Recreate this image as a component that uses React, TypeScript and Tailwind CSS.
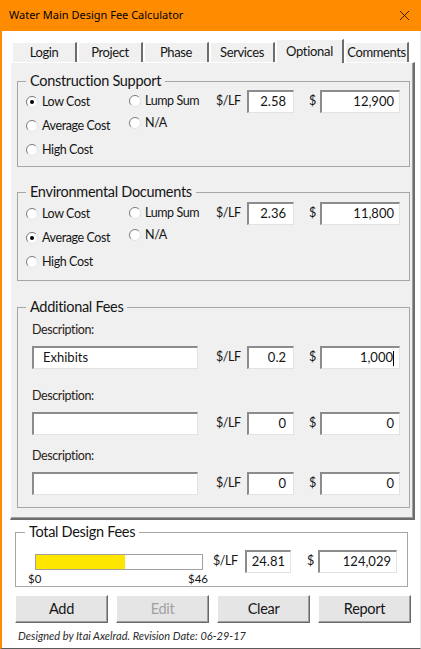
import { X } from 'lucide-react'

const cal = "font-['Lato','Liberation_Sans',sans-serif]"

function Radio({ checked }: { checked?: boolean }) {
  return (
    <svg width="12" height="12" viewBox="0 0 12 12" className="shrink-0">
      <circle cx="6" cy="6" r="5.5" fill="#fff" />
      <path d="M2.1 9.9 A5.5 5.5 0 0 1 9.9 2.1" stroke="#7a7a7a" strokeWidth="1" fill="none" />
      <path d="M9.9 2.1 A5.5 5.5 0 0 1 2.1 9.9" stroke="#e2e2e2" strokeWidth="1" fill="none" />
      {checked && <circle cx="6" cy="6" r="2" fill="#000" />}
    </svg>
  )
}

function Opt({ label, checked, h }: { label: string; checked?: boolean; h: string }) {
  return (
    <div className={`flex items-center gap-[4px] ${h}`}>
      <Radio checked={checked} />
      <span className="text-[12.5px] tracking-[-0.4px] text-[#151515]">{label}</span>
    </div>
  )
}

function Box({ value, className, caret }: { value: string; className: string; caret?: boolean }) {
  return (
    <div
      className={`h-[23px] bg-white border-t-2 border-l-2 border-b border-r border-t-[#8c8c8c] border-l-[#8c8c8c] border-b-[#e3e3e3] border-r-[#e3e3e3] flex items-center text-[13px] text-[#151515] ${className}`}
    >
      {value}
      {caret && <span className="w-px h-[15px] bg-black" />}
    </div>
  )
}

function Amounts({ lf, total, caret }: { lf: string; total: string; caret?: boolean }) {
  return (
    <div className="flex items-center">
      <span className="w-[31px] text-[12.5px] tracking-[-0.4px] text-[#151515]">$/LF</span>
      <Box value={lf} className="w-[47px] justify-end pr-[7px]" />
      <span className="ml-[15px] w-[11px] text-[12.5px] text-[#151515]">$</span>
      <Box value={total} className="w-[80px] justify-end pr-[5px]" caret={caret} />
    </div>
  )
}

function Legend({ children }: { children: string }) {
  return <legend className="px-[4px] text-[14.5px] tracking-[-0.3px] leading-[16px] text-[#151515]">{children}</legend>
}

function CostGroup({
  title,
  sel,
  lf,
  total,
  className,
}: {
  title: string
  sel: number
  lf: string
  total: string
  className: string
}) {
  return (
    <fieldset className={`ml-[6px] w-[392px] border border-[#a6a6a6] pl-[8px] pr-[9px] ${className}`}>
      <Legend>{title}</Legend>
      <div className="flex items-start">
        <div className="w-[103px]">
          <Opt label="Low Cost" checked={sel === 0} h="h-[24px]" />
          <Opt label="Average Cost" checked={sel === 1} h="h-[24px]" />
          <Opt label="High Cost" checked={sel === 2} h="h-[24px]" />
        </div>
        <div className="w-[87px]">
          <Opt label="Lump Sum" h="h-[22px]" />
          <Opt label="N/A" h="h-[22px]" />
        </div>
        <Amounts lf={lf} total={total} />
      </div>
    </fieldset>
  )
}

function FeeRow({ desc, lf, total, caret, mt }: { desc: string; lf: string; total: string; caret?: boolean; mt: string }) {
  return (
    <div className={mt}>
      <div className="text-[12.5px] tracking-[-0.4px] leading-[16px] text-[#2a2218]">Description:</div>
      <div className="flex items-center mt-[8px]">
        <Box value={desc} className="w-[166px] pl-[9px]" />
        <div className="ml-[18px]">
          <Amounts lf={lf} total={total} caret={caret} />
        </div>
      </div>
    </div>
  )
}

const tabs = ['Login', 'Project', 'Phase', 'Services', 'Optional', 'Comments']

export default function App() {
  return (
    <div className={`w-[421px] h-[649px] flex flex-col bg-white ${cal}`}>
      <div className="h-[31px] shrink-0 bg-[#ff8c00] flex items-center justify-between pl-[9px] pr-[8px]">
        <span className="font-['Noto_Sans',sans-serif] text-[11px] text-black">Water Main Design Fee Calculator</span>
        <X className="w-[17px] h-[17px] text-black" strokeWidth={1.1} />
      </div>

      <div className="flex-1 flex flex-col border-l-2 border-[#ff8c00] border-b border-b-[#5a5a5a] border-r border-r-[#e8e8e8]">
        {/* tab strip */}
        <div className="h-[31px] shrink-0 flex items-end pl-[10px]">
          {tabs.map((t) => {
            const on = t === 'Optional'
            return (
              <div
                key={t}
                className={
                  on
                    ? 'relative z-10 -mb-px h-[24px] w-[68px] mr-[1px] bg-[#f0f0f0] border-t border-l border-white border-r-2 border-r-[#6d6d6d] flex items-start justify-center pt-[2px] text-[13px] tracking-[-0.3px] text-[#151515]'
                    : `h-[20px] ${t === 'Comments' ? 'w-[64px]' : 'w-[65px] mr-px'} text-[13px] tracking-[-0.4px] bg-[#f0f0f0] border-t border-l border-white border-r-2 border-r-[#6d6d6d] flex items-center justify-center text-[#151515]`
                }
              >
                {t}
              </div>
            )
          })}
        </div>

        {/* tab panel */}
        <div className="ml-[8px] w-[405px] h-[458px] shrink-0 bg-[#f0f0f0] border-t border-l border-white border-r-2 border-b-2 border-r-[#6d6d6d] border-b-[#6d6d6d] shadow-[inset_-1px_-1px_0_#a0a0a0] pt-[10px]">
          <CostGroup title="Construction Support" sel={0} lf="2.58" total="12,900" className="pt-[1px] pb-[4px]" />
          <CostGroup title="Environmental Documents" sel={1} lf="2.36" total="11,800" className="mt-[17px] pt-[2px] pb-[6px]" />

          <fieldset className="mt-[18px] ml-[6px] w-[392px] border border-[#a6a6a6] pl-[8px] pr-[9px] pb-[12px]">
            <Legend>Additional Fees</Legend>
            <div className="pl-[6px]">
              <FeeRow desc="Exhibits" lf="0.2" total="1,000" caret mt="mt-[7px]" />
              <FeeRow desc="" lf="0" total="0" mt="mt-[19px]" />
              <FeeRow desc="" lf="0" total="0" mt="mt-[13px]" />
            </div>
          </fieldset>
        </div>

        {/* totals */}
        <fieldset className="mt-[4px] ml-[13px] w-[393px] border border-[#a6a6a6] pl-[9px]">
          <Legend>Total Design Fees</Legend>
          <div className="flex items-start">
            <div className="w-[188px] pl-[3px]">
              <div className="ml-[7px] mt-[14px] w-[168px] h-[16px] bg-white border border-[#a0a0a0] flex">
                <div className="w-[89px] h-full bg-[#ffe600]" />
              </div>
              <div className="mt-[1px] w-[180px] flex justify-between text-[11.5px] leading-[15px] text-[#151515]">
                <span>$0</span>
                <span>$46</span>
              </div>
            </div>
            <div className="mt-[10px] flex items-center">
              <span className="w-[32px] text-[12.5px] tracking-[-0.4px] text-[#151515]">$/LF</span>
              <Box value="24.81" className="w-[46px] justify-end pr-[5px]" />
              <span className="ml-[16px] w-[11px] text-[12.5px] text-[#151515]">$</span>
              <Box value="124,029" className="w-[79px] justify-end pr-[5px]" />
            </div>
          </div>
        </fieldset>

        <div className="mt-[8px] ml-[13px] flex gap-[8px]">
          {['Add', 'Edit', 'Clear', 'Report'].map((b) => (
            <div
              key={b}
              className={`w-[93px] h-[28px] bg-[#e5e5e5] border-t border-l border-white border-r border-b border-r-[#696969] border-b-[#696969] shadow-[inset_-1px_-1px_0_#a0a0a0] flex items-center justify-center text-[14.5px] tracking-[-0.3px] ${b === 'Edit' ? 'text-[#a0a0a0]' : 'text-[#151515]'}`}
            >
              {b}
            </div>
          ))}
        </div>

        <div className="mt-[5px] pl-[16px] text-[11px] italic text-[#2a2a2a]">
          Designed by Itai Axelrad. Revision Date: 06-29-17
        </div>
      </div>
    </div>
  )
}
